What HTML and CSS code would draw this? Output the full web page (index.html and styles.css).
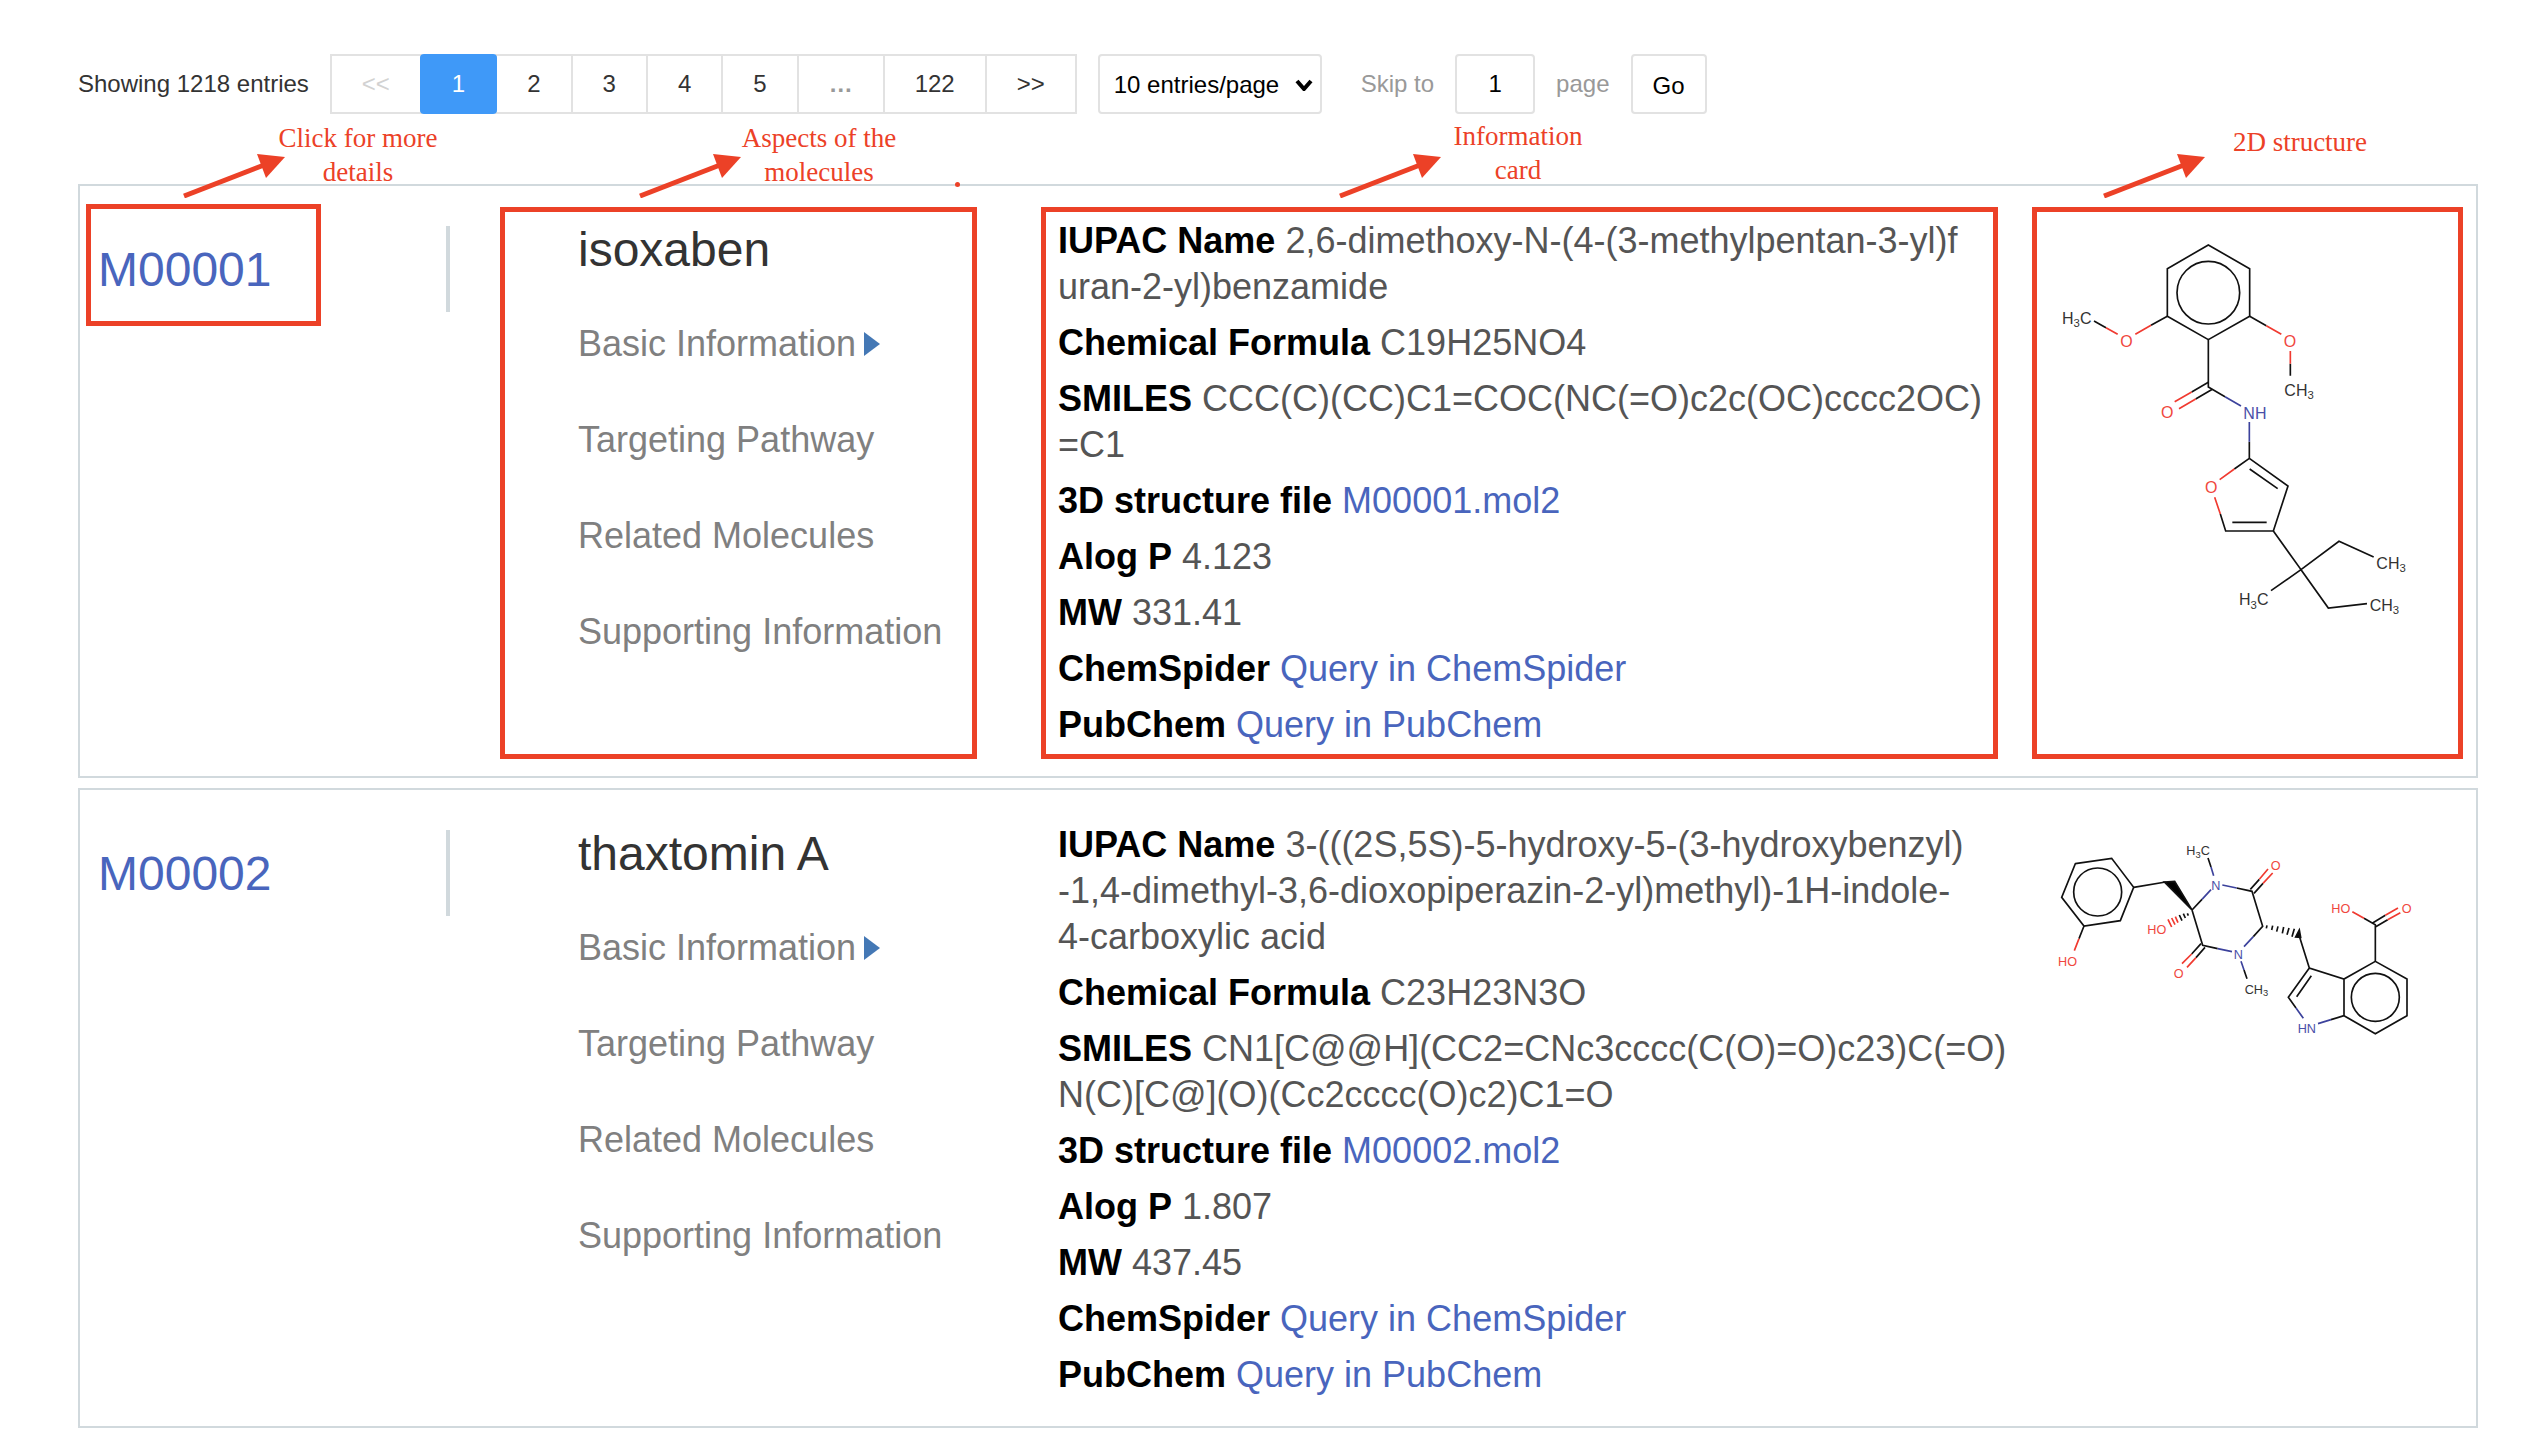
FILE: index.html
```html
<!DOCTYPE html>
<html lang="en">
<head>
    <meta charset="UTF-8">
    <meta name="viewport" content="width=device-width, initial-scale=1.0">
    <title>Molecules</title>
    <link rel="stylesheet" href="styles.css">
</head>
<body>
    <nav class="toolbar">
        <span>Showing 1218 entries</span>
        <div class="pager">
            <button class="prev" disabled>&lt;&lt;</button>
            <button class="active">1</button>
            <button>2</button>
            <button>3</button>
            <button>4</button>
            <button>5</button>
            <span class="dots">…</span>
            <button>122</button>
            <button>&gt;&gt;</button>
        </div>
        <div class="page-size">
            <select aria-label="Entries per page">
                <option>10 entries/page</option>
                <option>20 entries/page</option>
                <option>50 entries/page</option>
            </select>
            <svg viewBox="0 0 18 12" aria-hidden="true"><path d="M2 2l7 8 7-8"/></svg>
        </div>
        <div class="skip">
            <label for="skip-page">Skip to</label>
            <input type="text" id="skip-page" value="1">
            <span>page</span>
            <button>Go</button>
        </div>
    </nav>

    <main>
        <article class="card">
            <div class="col">
                <div class="mol-id"><a href="#M00001">M00001</a></div>
                <div class="mark mark-id"></div>
                <svg class="arrow arrow-id" viewBox="0 0 104 44"><path class="shaft" d="M2 42L82 11"/><path d="M103 3L75 0L84 24z"/></svg>
                <p class="note note-id">Click for more<br>details</p>
            </div>
            <div class="col">
                <h2>isoxaben</h2>
                <ul class="aspects">
                    <li class="current"><a href="#basic">Basic Information</a></li>
                    <li><a href="#pathway">Targeting Pathway</a></li>
                    <li><a href="#related">Related Molecules</a></li>
                    <li><a href="#supporting">Supporting Information</a></li>
                </ul>
                <div class="mark mark-aspects"></div>
                <svg class="arrow arrow-aspects" viewBox="0 0 104 44"><path class="shaft" d="M2 42L82 11"/><path d="M103 3L75 0L84 24z"/></svg>
                <p class="note note-aspects">Aspects of the<br>molecules</p>
                <span class="dot"></span>
            </div>
            <div class="col info">
                <p><b>IUPAC Name</b> 2,6-dimethoxy-N-(4-(3-methylpentan-3-yl)f<br>uran-2-yl)benzamide</p>
                <p><b>Chemical Formula</b> C19H25NO4</p>
                <p><b>SMILES</b> CCC(C)(CC)C1=COC(NC(=O)c2c(OC)cccc2OC)<br>=C1</p>
                <p><b>3D structure file</b> <a href="#mol2">M00001.mol2</a></p>
                <p><b>Alog P</b> 4.123</p>
                <p><b>MW</b> 331.41</p>
                <p><b>ChemSpider</b> <a href="#chemspider">Query in ChemSpider</a></p>
                <p><b>PubChem</b> <a href="#pubchem">Query in PubChem</a></p>
                <div class="mark mark-info"></div>
                <svg class="arrow arrow-info" viewBox="0 0 104 44"><path class="shaft" d="M2 42L82 11"/><path d="M103 3L75 0L84 24z"/></svg>
                <p class="note note-info">Information<br>card</p>
            </div>
            <div class="col structure">
                <svg class="molecule large" viewBox="54 0 1260 1320" role="img" aria-label="Structure of isoxaben">
                    <path d="M565 87L689 158V301L565 371L442 301V158z"/>
                    <circle cx="565" cy="230" r="94"/>
                    <path d="M442 301L393 328M258 335L222 315M689 301L739 329M811 443V479M565 371V513L615 542"/>
                    <path d="M565 499L515 528M577 520L527 549M688 677V727L804 810L760 945H617L601 894M688 727L643 759"/>
                    <path d="M689 759L773 818M637 919H740M760 945L843 1061L957 976L1061 1023M753 1124L843 1061L925 1176L1041 1163"/>
                    <path class="oxygen" d="M393 328L346 355M293 355L258 335M739 329L784 355M811 405V443M515 528L464 557M527 549L477 578M643 759L599 791M584 844L601 894"/>
                    <path class="nitrogen" d="M615 542L663 570M688 618V677"/>
                    <text x="126" y="323">H<tspan class="sub" dy="10">3</tspan><tspan dy="-10">C</tspan></text>
                    <text x="793" y="539">CH<tspan class="sub" dy="10">3</tspan></text>
                    <text x="1069" y="1059">CH<tspan class="sub" dy="10">3</tspan></text>
                    <text x="1049" y="1184">CH<tspan class="sub" dy="10">3</tspan></text>
                    <text x="657" y="1168">H<tspan class="sub" dy="10">3</tspan><tspan dy="-10">C</tspan></text>
                    <text class="oxygen" x="301" y="392">O</text>
                    <text class="oxygen" x="791" y="392">O</text>
                    <text class="oxygen" x="423" y="607">O</text>
                    <text class="oxygen" x="555" y="832">O</text>
                    <text class="nitrogen" x="670" y="609">NH</text>
                </svg>
                <div class="mark mark-structure"></div>
                <svg class="arrow arrow-structure" viewBox="0 0 104 44"><path class="shaft" d="M2 42L82 11"/><path d="M103 3L75 0L84 24z"/></svg>
                <p class="note note-structure">2D structure</p>
            </div>
        </article>

        <article class="card">
            <div class="col">
                <div class="mol-id"><a href="#M00002">M00002</a></div>
            </div>
            <div class="col">
                <h2>thaxtomin A</h2>
                <ul class="aspects">
                    <li class="current"><a href="#basic">Basic Information</a></li>
                    <li><a href="#pathway">Targeting Pathway</a></li>
                    <li><a href="#related">Related Molecules</a></li>
                    <li><a href="#supporting">Supporting Information</a></li>
                </ul>
            </div>
            <div class="col info">
                <p><b>IUPAC Name</b> 3-(((2S,5S)-5-hydroxy-5-(3-hydroxybenzyl)<br>-1,4-dimethyl-3,6-dioxopiperazin-2-yl)methyl)-1H-indole-<br>4-carboxylic acid</p>
                <p><b>Chemical Formula</b> C23H23N3O</p>
                <p><b>SMILES</b> CN1[C@@H](CC2=CNc3cccc(C(O)=O)c23)C(=O)<br>N(C)[C@](O)(Cc2cccc(O)c2)C1=O</p>
                <p><b>3D structure file</b> <a href="#mol2">M00002.mol2</a></p>
                <p><b>Alog P</b> 1.807</p>
                <p><b>MW</b> 437.45</p>
                <p><b>ChemSpider</b> <a href="#chemspider">Query in ChemSpider</a></p>
                <p><b>PubChem</b> <a href="#pubchem">Query in PubChem</a></p>
            </div>
            <div class="col structure">
                <svg class="molecule" viewBox="24 0 1260 720" role="img" aria-label="Structure of thaxtomin A">
                    <!-- phenol ring -->
                    <path d="M136 131L245 115L311 202L271 302L162 318L95 232z"/>
                    <circle cx="203" cy="216" r="72"/>
                    <path d="M162 318L147 356M311 202L407 186"/>
                    <path class="wedge" d="M403 186L434 184L486 270z"/>
                    <!-- piperazine ring -->
                    <path d="M486 270L516 238M486 270L518 376L563 386M620 204L666 214L698 319L670 350M534 114L543 141M642 450L651 476"/>
                    <path d="M661 208L688 178M672 220L699 190M513 371L485 402M525 382L498 413"/>
                    <path d="M472 280L475 287M460 281L466 294M448 285L456 302"/>
                    <path d="M711 316L709 325M728 317L725 330M744 319L740 335M761 321L757 340M777 324L771 344M793 326L786 350"/>
                    <path class="wedge" d="M808 330L797 351L812 352z"/>
                    <!-- indole -->
                    <path d="M806 342L838 444L942 477L1036 424L1131 477V587L1036 641L942 587V477M838 444L775 532L798 564M844 467L800 530M942 587L903 599"/>
                    <circle cx="1036" cy="532" r="72"/>
                    <path d="M1036 424V314L1002 295M1029 308L1066 286M1036 321L1073 299"/>
                    <path class="oxygen" d="M147 356L133 392M688 178L714 147M699 190L728 159M485 402L456 431M498 413L471 442M1002 295L967 275M1066 286L1104 264M1073 299L1111 278"/>
                    <path class="oxygen" d="M436 290L444 308M425 294L435 314M414 298L425 321"/>
                    <path class="nitrogen" d="M516 238L543 209M577 195L620 204M543 141L551 167M563 386L606 395M670 350L642 380M633 424L642 450M798 564L820 595M903 599L864 611"/>
                    <text x="469" y="106">H<tspan class="sub" dy="8">3</tspan><tspan dy="-8">C</tspan></text>
                    <text x="644" y="521">CH<tspan class="sub" dy="8">3</tspan></text>
                    <text class="oxygen" x="84" y="437">HO</text>
                    <text class="oxygen" x="352" y="341">HO</text>
                    <text class="oxygen" x="904" y="278">HO</text>
                    <text class="oxygen" x="722" y="151">O</text>
                    <text class="oxygen" x="431" y="475">O</text>
                    <text class="oxygen" x="1115" y="278">O</text>
                    <text class="nitrogen" x="544" y="209">N</text>
                    <text class="nitrogen" x="611" y="417">N</text>
                    <text class="nitrogen" x="803" y="639">HN</text>
                </svg>
            </div>
        </article>
    </main>
</body>
</html>
```
FILE: styles.css
```css
* {
    box-sizing: border-box;
}

body {
    margin: 0;
    padding: 54px 68px 10px 78px;
    background: #fff;
    color: #333;
    font-family: "Helvetica Neue", "Liberation Sans", Arial, sans-serif;
    font-size: 24px;
}

a {
    color: #4965bd;
    text-decoration: none;
}

h2,
p,
ul {
    margin: 0;
    padding: 0;
    font-weight: normal;
}

button,
input,
select {
    height: 60px;
    border: 2px solid #e2e2e2;
    border-radius: 4px;
    background: #fff;
    color: #000;
    font: inherit;
}

/* Toolbar */
.toolbar {
    display: flex;
    align-items: center;
    gap: 21px;
    height: 60px;
    margin-bottom: 70px;
    white-space: nowrap;
}

.pager {
    display: flex;
}

.pager button,
.pager .dots {
    height: 60px;
    padding: 0 30px;
    border: 2px solid #e2e2e2;
    border-radius: 0;
    color: #333;
    line-height: 56px;
}

.pager > * + * {
    margin-left: -2px;
}

.pager .prev {
    color: #d2d2d2;
}

.pager .dots {
    color: #999;
    font-weight: bold;
}

.pager .active {
    z-index: 1;
    border-color: #3f99f8;
    border-radius: 4px;
    background: #3f99f8;
    color: #fff;
}

.page-size {
    position: relative;
}

.page-size select {
    width: 224px;
    padding: 0 14px;
    appearance: none;
}

.page-size svg {
    position: absolute;
    top: 25px;
    right: 9px;
    width: 18px;
    height: 12px;
    fill: none;
    stroke: #000;
    stroke-width: 4;
    pointer-events: none;
}

.skip {
    display: flex;
    align-items: center;
    gap: 21px;
    margin-left: 18px;
    color: #999;
}

.skip input {
    width: 80px;
    text-align: center;
}

.skip button {
    width: 76px;
    padding: 3px 0 0;
}

/* Molecule cards */
.card {
    display: grid;
    grid-template-columns: 12fr 12fr 23fr 12fr;
    padding: 30px 18px 28px;
    border: 2px solid #d1d9dd;
}

.card + .card {
    margin-top: 10px;
}

.col {
    position: relative;
    min-width: 0;
}

.mol-id {
    display: flex;
    align-items: center;
    justify-content: space-between;
    height: 86px;
    margin: 10px 128px 0 0;
    border-right: 4px solid #d1d9dd;
    font-size: 48px;
}

h2 {
    font-size: 48px;
    line-height: 68px;
}

.aspects {
    margin-top: 12px;
    list-style: none;
    font-size: 36px;
    line-height: 96px;
}

.aspects li {
    display: flex;
    align-items: center;
}

.aspects a {
    color: #808080;
}

.aspects .current::after {
    content: "";
    margin-left: 8px;
    border: solid transparent;
    border-width: 12px 0 12px 16px;
    border-left-color: #4478b5;
}

.info {
    padding-top: 2px;
    color: #555;
    font-size: 36px;
    line-height: 46px;
    white-space: nowrap;
}

.info p + p {
    margin-top: 10px;
}

.info b {
    color: #000;
}

/* 2D structures */
.structure {
    padding-left: 60px;
}

.molecule {
    display: block;
    width: 100%;
    fill: none;
    stroke: #111;
    stroke-width: 5;
    font-size: 38px;
}

.molecule.large {
    font-size: 48px;
}

.molecule .wedge {
    fill: #000;
}

.molecule .oxygen {
    stroke: #f03a30;
}

.molecule .nitrogen {
    stroke: #3c429c;
}

.molecule text {
    fill: #333;
    stroke: none;
}

.molecule text.oxygen {
    fill: #f0473e;
    stroke: none;
}

.molecule text.nitrogen {
    fill: #4a50a8;
    stroke: none;
}

.molecule .sub {
    font-size: 28px;
}

.molecule.large .sub {
    font-size: 34px;
}

/* Red guide marks laid over the first card */
.mark {
    position: absolute;
    border: 5px solid #ec4127;
    pointer-events: none;
}

.mark-id {
    top: -12px;
    left: -12px;
    width: 235px;
    height: 122px;
}

.mark-aspects {
    inset: -9px 81px -11px -78px;
}

.mark-info {
    inset: -9px -20px -11px -17px;
}

.mark-structure {
    inset: -9px -5px -11px 54px;
}

.arrow {
    position: absolute;
    top: -62px;
    width: 104px;
    height: 44px;
    fill: #ec4127;
}

.arrow .shaft {
    stroke: #ec4127;
    stroke-width: 5;
}

.arrow-id {
    left: 84px;
}

.arrow-aspects {
    left: 60px;
}

.arrow-info {
    left: 280px;
}

.arrow-structure {
    left: 124px;
}

.note {
    position: absolute;
    top: -95px;
    width: 200px;
    color: #ec4127;
    font-family: "Liberation Serif", "Times New Roman", serif;
    font-size: 27px;
    line-height: 34px;
    text-align: center;
}

.info .note {
    margin: 0;
}

.note-id {
    left: 160px;
}

.note-aspects {
    left: 141px;
}

.note-info {
    top: -97px;
    left: 360px;
}

.note-structure {
    top: -91px;
    left: 222px;
}

.dot {
    position: absolute;
    top: -34px;
    left: 377px;
    width: 5px;
    height: 5px;
    border-radius: 50%;
    background: #ec4127;
}
```
